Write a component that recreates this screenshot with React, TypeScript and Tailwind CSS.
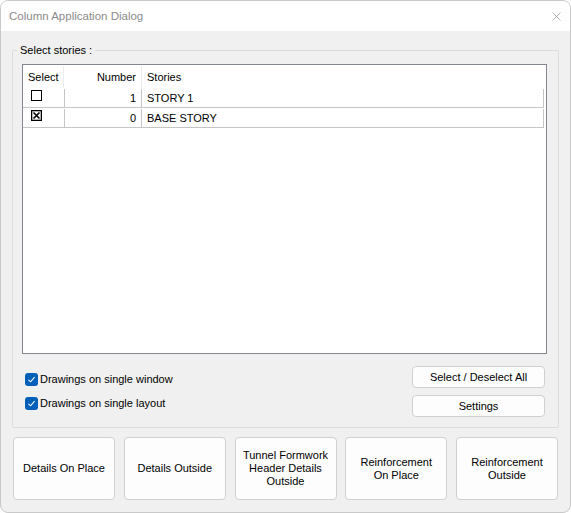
import { X } from "lucide-react";

const stories = [
  { checked: false, number: 1, name: "STORY 1" },
  { checked: true, number: 0, name: "BASE STORY" },
];

const bottomButtons = [
  ["Details On Place"],
  ["Details Outside"],
  ["Tunnel Formwork", "Header Details", "Outside"],
  ["Reinforcement", "On Place"],
  ["Reinforcement", "Outside"],
];

const GridCheck = ({ checked }: { checked: boolean }) => (
  <svg width="11" height="11" viewBox="0 0 11 11" className="block">
    <rect x="0.5" y="0.5" width="10" height="10" fill="white" stroke="black" strokeWidth={checked ? 1.6 : 1} />
    {checked && <path d="M2.5 2.5 L8.5 8.5 M8.5 2.5 L2.5 8.5" stroke="black" strokeWidth="1.6" />}
  </svg>
);

const BlueCheck = () => (
  <span className="w-[13px] h-[13px] rounded-[3px] bg-[#005fb8] flex items-center justify-center shrink-0">
    <svg width="9" height="9" viewBox="0 0 9 9">
      <path d="M1.5 4.8 L3.6 6.8 L7.6 2.2" fill="none" stroke="white" strokeWidth="1.1" />
    </svg>
  </span>
);

const App = () => {
  return (
    <div className="w-[571px] h-[513px] bg-white font-['Segoe_UI','Liberation_Sans',sans-serif] text-[11px] text-black">
      <div className="h-full rounded-lg border border-[#c9c9c9] overflow-hidden flex flex-col bg-[#f0f0f0]">
        <div className="h-[30px] bg-white flex items-center justify-between pl-[8px] pr-[6px] pt-[1px] shrink-0">
          <span className="text-[11.5px] text-[#8a8a8a]">Column Application Dialog</span>
          <X className="w-[15px] h-[15px] text-[#909090]" strokeWidth={1.1} />
        </div>

        <div className="flex-1 px-[11px] pt-[11px]">
          <fieldset className="border border-[#dcdcdc] rounded-[2px] pl-[9px] pr-[11px] pb-[8px] pt-[6px] h-[386px] flex flex-col">
            <legend className="-ml-[5px] px-[3px] leading-[16px]">Select stories :</legend>

            <div className="h-[290px] border border-[#828790] bg-white">
              <div className="flex h-[23px] items-center pt-[1px]">
                <div className="w-[41px] h-full pl-[5px] flex items-center border-r border-[#ececec]">Select</div>
                <div className="w-[78px] h-full pr-[5px] flex items-center justify-end border-r border-[#ececec]">Number</div>
                <div className="flex-1 pl-[5px]">Stories</div>
              </div>
              {stories.map((s) => (
                <div key={s.name} className="flex h-[20px] items-center border-b border-[#c5c5c5] mr-[2px] pt-[1px]">
                  <div className="w-[41px] h-full flex items-center pl-[8px] pb-[5px]">
                    <GridCheck checked={s.checked} />
                  </div>
                  <div className="w-[78px] h-full pr-[5px] flex items-center justify-end border-x border-[#c5c5c5]">{s.number}</div>
                  <div className="flex-1 h-full pl-[5px] flex items-center border-r border-[#c5c5c5]">{s.name}</div>
                </div>
              ))}
            </div>

            <div className="flex justify-between mt-[12px] pr-[2px]">
              <div className="flex flex-col gap-[11px] pl-[3px] pt-[7px]">
                <label className="flex items-center gap-[2px] h-[13px]">
                  <BlueCheck />
                  <span>Drawings on single window</span>
                </label>
                <label className="flex items-center gap-[2px] h-[13px]">
                  <BlueCheck />
                  <span>Drawings on single layout</span>
                </label>
              </div>
              <div className="flex flex-col gap-[7px]">
                <button className="w-[133px] h-[22px] bg-[#fdfdfd] border border-[#d0d0d0] rounded-[4px]">
                  Select / Deselect All
                </button>
                <button className="w-[133px] h-[22px] bg-[#fdfdfd] border border-[#d0d0d0] rounded-[4px]">
                  Settings
                </button>
              </div>
            </div>
          </fieldset>

          <div className="flex justify-between mt-[9px] px-[1px]">
            {bottomButtons.map((lines) => (
              <button
                key={lines.join(" ")}
                className="w-[102px] h-[63px] bg-[#fdfdfd] border border-[#d0d0d0] rounded-[4px] px-[3px] leading-[13px] flex flex-col items-center justify-center"
              >
                {lines.map((l) => (
                  <span key={l}>{l}</span>
                ))}
              </button>
            ))}
          </div>
        </div>
      </div>
    </div>
  );
};

export default App;
